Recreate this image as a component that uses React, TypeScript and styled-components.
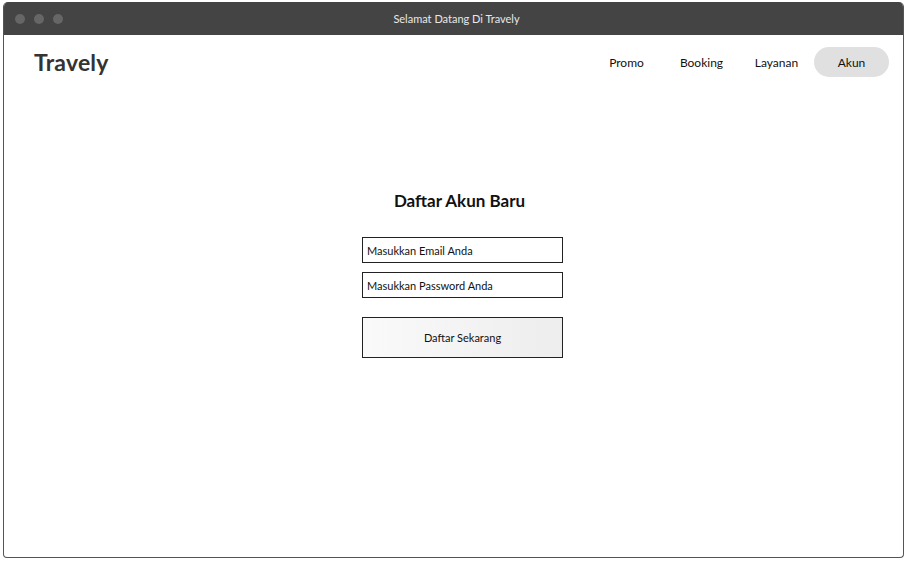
import React from "react";
import styled, { createGlobalStyle } from "styled-components";

const Global = createGlobalStyle`
  html, body { margin: 0; padding: 0; background: #fff; }
  body { font-family: "Lato", "Open Sans", sans-serif; color: #222; }
`;

const Window = styled.div`
  box-sizing: border-box;
  margin: 2px 0 0 3px;
  width: 901px;
  height: 556px;
  border: 1px solid #555;
  border-top: none;
  border-radius: 5px 5px 4px 4px;
  overflow: hidden;
  display: flex;
  flex-direction: column;
  background: #fff;
`;

const TitleBar = styled.div`
  height: 33px;
  background: #444;
  display: flex;
  align-items: center;
  position: relative;
  flex-shrink: 0;
  margin: 0 -1px;
`;

const Dots = styled.div`
  display: flex;
  gap: 9px;
  padding-left: 12px;
`;

const Dot = styled.span`
  width: 10px;
  height: 10px;
  border-radius: 50%;
  background: #666;
`;

const Title = styled.div`
  position: absolute;
  left: 0;
  right: 0;
  text-align: center;
  color: #e8e8e8;
  font-size: 11px;
  padding-left: 6px;
`;

const Header = styled.header`
  display: flex;
  align-items: center;
  justify-content: space-between;
  padding: 12px 14px 0 30px;
  height: 30px;
`;

const Logo = styled.div`
  font-size: 23px;
  font-weight: 700;
  color: #333;
  letter-spacing: 0.2px;
`;

const Nav = styled.nav`
  display: flex;
  align-items: center;
`;

const NavItem = styled.a<{ $active?: boolean }>`
  display: flex;
  align-items: center;
  justify-content: center;
  width: 75px;
  height: 30px;
  border-radius: 15px;
  background: ${(p) => (p.$active ? "#e0e0e0" : "transparent")};
  font-size: 12px;
  color: #111;
  cursor: pointer;
`;

const Main = styled.main`
  flex: 1;
  display: flex;
  flex-direction: column;
  align-items: flex-start;
  padding: 113px 0 0 358px;
`;

const Form = styled.form`
  width: 201px;
  display: flex;
  flex-direction: column;
`;

const Heading = styled.h1`
  margin: 0 6px 26px 0;
  text-align: center;
  font-size: 17px;
  font-weight: 700;
  color: #111;
`;

const Input = styled.input`
  box-sizing: border-box;
  width: 201px;
  height: 26px;
  border: 1px solid #222;
  padding: 0 4px;
  margin-bottom: 9px;
  font-family: inherit;
  font-size: 11px;
  color: #111;
  outline: none;
  &::placeholder { color: #111; opacity: 1; }
`;

const Button = styled.button`
  box-sizing: border-box;
  margin-top: 10px;
  width: 201px;
  height: 41px;
  border: 1px solid #222;
  background: linear-gradient(to right, #fafafa, #ededed);
  font-family: inherit;
  font-size: 11px;
  color: #111;
  cursor: pointer;
`;

export default function App() {
  return (
    <>
      <Global />
      <Window>
        <TitleBar>
          <Dots>
            <Dot />
            <Dot />
            <Dot />
          </Dots>
          <Title>Selamat Datang Di Travely</Title>
        </TitleBar>
        <Header>
          <Logo>Travely</Logo>
          <Nav>
            <NavItem>Promo</NavItem>
            <NavItem>Booking</NavItem>
            <NavItem>Layanan</NavItem>
            <NavItem $active>Akun</NavItem>
          </Nav>
        </Header>
        <Main>
          <Form onSubmit={(e) => e.preventDefault()}>
            <Heading>Daftar Akun Baru</Heading>
            <Input placeholder="Masukkan Email Anda" />
            <Input placeholder="Masukkan Password Anda" />
            <Button type="submit">Daftar Sekarang</Button>
          </Form>
        </Main>
      </Window>
    </>
  );
}
